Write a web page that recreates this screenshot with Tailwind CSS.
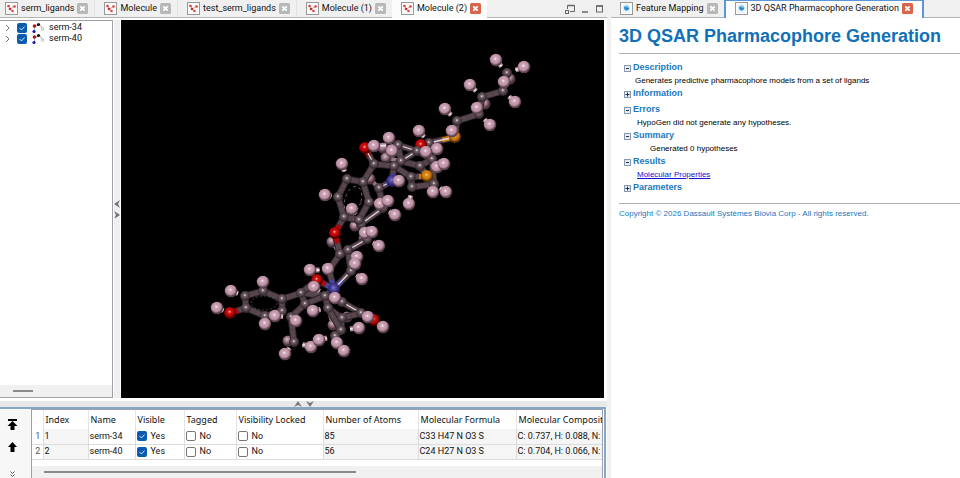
<!DOCTYPE html>
<html lang="en">
<head>
    <meta charset="UTF-8">
    <meta name="viewport" content="width=device-width, initial-scale=1.0">
    <script src="https://cdn.jsdelivr.net/npm/@tailwindcss/browser@4"></script>
    <title>3D QSAR Pharmacophore Generation</title>
</head>
<body class="bg-[#f0f0f0]">
    <!-- shared icons -->
    <svg class="hidden">
        <symbol id="i-mol" viewBox="0 0 13 13">
            <rect x=".5" y=".5" width="12" height="12" fill="#fafafa" stroke="#999"/>
            <path d="M3.5 4 5.5 7 9 4.5M5.5 7 7 9" stroke="#e9a0a0" fill="none"/>
            <circle cx="3.5" cy="4" r="1.3" fill="#d84040"/><circle cx="5" cy="7" r="1.3" fill="#c83030"/><circle cx="9.5" cy="4.5" r="1.3" fill="#d84040"/><circle cx="7.5" cy="9" r="1.3" fill="#e05050"/>
        </symbol>
        <symbol id="i-web" viewBox="0 0 13 13">
            <rect x=".5" y=".5" width="12" height="12" fill="#fafafa" stroke="#999"/>
            <path d="M3 2.500h4l3 3v5H3z" fill="#e4f2fb"/>
            <circle cx="6.500" cy="6" r="2.800" fill="#7cc6ee"/><path d="M4 5.500c2-1.500 4 1.500 5 0v1c-1 2-3 2-4 1z" fill="#2f86c4"/>
        </symbol>
        <symbol id="i-x" viewBox="0 0 11 11">
            <rect width="11" height="11" rx="1.500" fill="currentColor"/>
            <path d="M3.300 3.300l4.400 4.400M7.700 3.300l-4.400 4.400" stroke="#fff" stroke-width="1.800"/>
        </symbol>
        <symbol id="i-lig" viewBox="0 0 12 12">
            <path d="M2.500 5 7 2.500 10.500 6M2.500 5v5" stroke="#aaa" fill="none"/>
            <circle cx="2.500" cy="4" r="1.800" fill="#b01818"/><circle cx="6.500" cy="2.500" r="1.600" fill="#111"/><circle cx="2" cy="9.500" r="1.600" fill="#1414c0"/><circle cx="10.500" cy="7" r="1.300" fill="#fff" stroke="#999" stroke-width=".6"/>
        </symbol>
        <symbol id="i-minus" viewBox="0 0 7 7">
            <rect x=".5" y=".5" width="6" height="6" fill="#e8edf3" stroke="#8898b0"/><path d="M2 3.500h3" stroke="#234"/>
        </symbol>
        <symbol id="i-plus" viewBox="0 0 7 7">
            <rect x=".5" y=".5" width="6" height="6" fill="#e8edf3" stroke="#8898b0"/><path d="M1.500 3.500h4M3.500 1.500v4" stroke="#234"/>
        </symbol>
    </svg>

    <div class="grid grid-cols-[607fr_353fr] min-h-screen font-[Roboto,sans-serif] text-[9px] leading-[11px] text-[#111]">

        <!-- molecule window -->
        <div class="flex flex-col min-w-0 bg-white">
            <div class="flex h-[18px] bg-[#f0f0f0] whitespace-nowrap">
                <div class="flex items-center gap-[3px] pl-[5px] pr-[6px] border-b border-r border-b-[#b4b4b4] border-r-[#e2e2e2]">
                    <svg class="size-[13px]"><use href="#i-mol"/></svg><span>serm_ligands</span>
                    <button aria-label="Close" class="text-[#b8b8b8]"><svg class="size-[11px]"><use href="#i-x"/></svg></button>
                </div>
                <div class="flex items-center gap-[3px] pl-[9px] pr-[6px] border-b border-r border-b-[#b4b4b4] border-r-[#e2e2e2]">
                    <svg class="size-[13px]"><use href="#i-mol"/></svg><span>Molecule</span>
                    <button aria-label="Close" class="text-[#b8b8b8]"><svg class="size-[11px]"><use href="#i-x"/></svg></button>
                </div>
                <div class="flex items-center gap-[3px] pl-[9px] pr-[6px] border-b border-r border-b-[#b4b4b4] border-r-[#e2e2e2]">
                    <svg class="size-[13px]"><use href="#i-mol"/></svg><span>test_serm_ligands</span>
                    <button aria-label="Close" class="text-[#b8b8b8]"><svg class="size-[11px]"><use href="#i-x"/></svg></button>
                </div>
                <div class="flex items-center gap-[3px] pl-[9px] pr-[6px] border-b border-b-[#b4b4b4]">
                    <svg class="size-[13px]"><use href="#i-mol"/></svg><span>Molecule (1)</span>
                    <button aria-label="Close" class="text-[#b8b8b8]"><svg class="size-[11px]"><use href="#i-x"/></svg></button>
                </div>
                <div class="flex items-center gap-[3px] pl-[9px] pr-[6px] pb-px bg-[#fcfcfc]">
                    <svg class="size-[13px]"><use href="#i-mol"/></svg><span>Molecule (2)</span>
                    <button aria-label="Close" class="text-[#d9644a]"><svg class="size-[11px]"><use href="#i-x"/></svg></button>
                </div>
                <div class="flex flex-1 items-center justify-end gap-[6px] pr-[3px] border-b border-[#b4b4b4] text-[#666]">
                    <button aria-label="Restore"><svg class="w-[10px] h-[10px]" viewBox="0 0 10 10" fill="none" stroke="currentColor"><path d="M2.500 5V1.500h7v6H5"/><path d="M2.500 1.500h7" stroke-width="1.500"/><rect x=".5" y="6.500" width="3" height="3"/></svg></button>
                    <button aria-label="Minimize"><svg class="w-[8px] h-[10px]" viewBox="0 0 8 10"><path d="M1 8h6" stroke="currentColor" stroke-width="1.500"/></svg></button>
                    <button aria-label="Maximize"><svg class="w-[9px] h-[10px]" viewBox="0 0 9 10" fill="none" stroke="currentColor"><rect x="1.500" y="2" width="6" height="6"/><path d="M1 2h7" stroke-width="1.500"/></svg></button>
                </div>
            </div>

            <div class="flex flex-1 pt-[2px] pb-[3px] pr-[3px]">
                <div class="flex flex-col w-[113px] border-t border-r border-b border-[#a0a0a8]">
                    <ul class="flex-1 pt-px">
                        <li class="flex items-center h-[11px] pl-[5px]">
                            <svg class="w-[6px] h-[8px] mr-[6px]" viewBox="0 0 6 8"><path d="M1 1l3 3-3 3" fill="none" stroke="#777"/></svg>
                            <input id="l34" type="checkbox" checked class="appearance-none size-[10px] rounded-[2px] bg-[#0a5cb0]">
                            <svg class="size-[10px] -ml-[10px] pointer-events-none" viewBox="0 0 10 10"><path d="M2.500 5l2 2 3-3.500" fill="none" stroke="#cfe4f8"/></svg>
                            <svg class="size-3 ml-[5px] mr-[5px]"><use href="#i-lig"/></svg>
                            <label for="l34">serm-34</label>
                        </li>
                        <li class="flex items-center h-[11px] pl-[5px]">
                            <svg class="w-[6px] h-[8px] mr-[6px]" viewBox="0 0 6 8"><path d="M1 1l3 3-3 3" fill="none" stroke="#777"/></svg>
                            <input id="l40" type="checkbox" checked class="appearance-none size-[10px] rounded-[2px] bg-[#0a5cb0]">
                            <svg class="size-[10px] -ml-[10px] pointer-events-none" viewBox="0 0 10 10"><path d="M2.500 5l2 2 3-3.500" fill="none" stroke="#cfe4f8"/></svg>
                            <svg class="size-3 ml-[5px] mr-[5px]"><use href="#i-lig"/></svg>
                            <label for="l40">serm-40</label>
                        </li>
                    </ul>
                    <div class="flex items-center h-3 pl-[13px] bg-[#f0f0f0]"><div class="w-5 h-[2px] bg-[#8a8a8a]"></div></div>
                </div>
                <div class="flex items-center w-[6px] mx-px bg-[#efefef]">
                    <svg class="w-[6px] h-[18px]" viewBox="0 0 6 18" fill="#707070"><path d="M6 0 0 4l6 4-2-4zM0 11l6 4-6 4 2-4z"/></svg>
                </div>
                <div class="relative flex-1 bg-black">
                    <svg id="view" class="absolute inset-0 size-full" viewBox="121 20 483 378">
                        <defs>
                            <radialGradient id="gH" cx=".45" cy=".4"><stop offset="0" stop-color="#fff4fa"/><stop offset=".25" stop-color="#d0a8ba"/><stop offset=".75" stop-color="#b88ea2"/><stop offset="1" stop-color="#5c424c"/></radialGradient>
                            <radialGradient id="gB" cx=".42" cy=".36"><stop offset="0" stop-color="#d8bcc8"/><stop offset=".4" stop-color="#a98493"/><stop offset="1" stop-color="#4a343c"/></radialGradient>
                            <radialGradient id="gC" cx=".48" cy=".42"><stop offset="0" stop-color="#fff"/><stop offset=".25" stop-color="#7c6a72"/><stop offset=".6" stop-color="#57464e"/><stop offset="1" stop-color="#362a30"/></radialGradient>
                            <radialGradient id="gO" cx=".46" cy=".4"><stop offset="0" stop-color="#ffd0d0"/><stop offset=".25" stop-color="#d81414"/><stop offset=".7" stop-color="#b00404"/><stop offset="1" stop-color="#500000"/></radialGradient>
                            <radialGradient id="gS" cx=".46" cy=".4"><stop offset="0" stop-color="#ffe0a0"/><stop offset=".25" stop-color="#e08c18"/><stop offset=".7" stop-color="#c47410"/><stop offset="1" stop-color="#5a3400"/></radialGradient>
                            <radialGradient id="gN" cx=".46" cy=".4"><stop offset="0" stop-color="#8080d8"/><stop offset=".3" stop-color="#5850a8"/><stop offset="1" stop-color="#241c60"/></radialGradient>
                        </defs>
                    </svg>
                </div>
            </div>

            <div class="flex items-center justify-center h-[6px] bg-[#e8e8e8]">
                <svg class="w-[20px] h-[6px]" viewBox="0 0 20 6" fill="#777"><path d="M0 6 4 0l4 6-4-2zM12 0l4 6 4-6-4 2z"/></svg>
            </div>

            <!-- ligand table -->
            <div class="flex h-[71px] border-t-2 border-r-2 border-[#87a5c4] mr-px">
                <div class="flex flex-col items-center w-[31px] pr-[7px] pt-[10px] bg-[#f7f7f7]">
                    <button aria-label="Move to top"><svg class="w-[11px] h-[11px]" viewBox="0 0 11 11"><path d="M1 0h9v2H1zM5.500 2 10.500 7H7.500v4h-4V7H.5z"/></svg></button>
                    <button aria-label="Move up" class="mt-3"><svg class="w-[9px] h-[10px]" viewBox="0 0 9 10"><path d="M4.500 0 9 5H6.500v5h-4V5H0z"/></svg></button>
                    <button aria-label="More" class="mt-[19px]"><svg class="w-[5px] h-[6px]" viewBox="0 0 5 6" fill="none" stroke="#555"><path d="M.5.5l2 2 2-2M.5 3.500l2 2 2-2"/></svg></button>
                </div>
                <div class="flex-1 min-w-0 flex flex-col overflow-hidden border-t border-l border-r border-[#98a0ac] mr-px">
                    <div class="flex-1 overflow-hidden">
                        <table class="table-fixed w-[660px] border-collapse">
                            <colgroup><col class="w-[11px]"><col class="w-[45px]"><col class="w-[47px]"><col class="w-[49px]"><col class="w-[52px]"><col class="w-[87px]"><col class="w-[95px]"><col class="w-[98px]"><col></colgroup>
                            <thead class="font-['Noto_Sans'] text-left whitespace-nowrap">
                                <tr class="h-[19px] *:font-normal *:p-0 *:pl-[2px] *:border-r *:border-[#e4e4e4]">
                                    <th></th><th>Index</th><th>Name</th><th>Visible</th><th>Tagged</th><th>Visibility Locked</th><th>Number of Atoms</th><th>Molecular Formula</th><th>Molecular Composition</th>
                                </tr>
                            </thead>
                            <tbody class="whitespace-nowrap">
                                <tr class="h-[15px] *:p-0 *:pl-px *:border-r *:border-b *:border-[#dcdcdc]">
                                    <th class="font-normal text-[#555]">1</th><td class="bg-[#f5f5f5]">1</td><td>serm-34</td>
                                    <td><label class="flex items-center gap-1"><input type="checkbox" checked class="appearance-none size-[10px] rounded-[2px] bg-[#0a5cb0]"><svg class="size-[10px] -ml-[14px]" viewBox="0 0 10 10"><path d="M2.500 5l2 2 3-3.500" fill="none" stroke="#cfe4f8"/></svg>Yes</label></td>
                                    <td><label class="flex items-center gap-1"><input type="checkbox" class="appearance-none size-[10px] rounded-[2px] border border-[#777]">No</label></td>
                                    <td><label class="flex items-center gap-1"><input type="checkbox" class="appearance-none size-[10px] rounded-[2px] border border-[#777]">No</label></td>
                                    <td class="bg-[#f5f5f5]">85</td><td class="bg-[#f5f5f5]">C33 H47 N O3 S</td><td class="bg-[#f5f5f5]">C: 0.737, H: 0.088, N: 0.026</td>
                                </tr>
                                <tr class="h-[15px] *:p-0 *:pl-px *:border-r *:border-b *:border-[#dcdcdc]">
                                    <th class="font-normal text-[#555]">2</th><td class="bg-[#f5f5f5]">2</td><td>serm-40</td>
                                    <td><label class="flex items-center gap-1"><input type="checkbox" checked class="appearance-none size-[10px] rounded-[2px] bg-[#0a5cb0]"><svg class="size-[10px] -ml-[14px]" viewBox="0 0 10 10"><path d="M2.500 5l2 2 3-3.500" fill="none" stroke="#cfe4f8"/></svg>Yes</label></td>
                                    <td><label class="flex items-center gap-1"><input type="checkbox" class="appearance-none size-[10px] rounded-[2px] border border-[#777]">No</label></td>
                                    <td><label class="flex items-center gap-1"><input type="checkbox" class="appearance-none size-[10px] rounded-[2px] border border-[#777]">No</label></td>
                                    <td class="bg-[#f5f5f5]">56</td><td class="bg-[#f5f5f5]">C24 H27 N O3 S</td><td class="bg-[#f5f5f5]">C: 0.704, H: 0.066, N: 0.034</td>
                                </tr>
                            </tbody>
                        </table>
                    </div>
                    <div class="flex items-center h-3 pl-3 bg-[#f0f0f0]"><div class="w-[312px] h-[2px] bg-[#8a8a8a]"></div></div>
                </div>
            </div>
        </div>

        <!-- report window -->
        <div class="flex flex-col min-w-0 border-l-4 border-[#f0f0f0] bg-white">
            <div class="flex h-[18px] bg-[#f0f0f0] whitespace-nowrap">
                <div class="flex items-center gap-[3px] pl-[9px] pr-[6px] border-b border-[#b4b4b4]">
                    <svg class="size-[13px]"><use href="#i-web"/></svg><span>Feature Mapping</span>
                    <button aria-label="Close" class="text-[#b8b8b8]"><svg class="size-[11px]"><use href="#i-x"/></svg></button>
                </div>
                <div class="flex items-center gap-[3px] pl-[9px] pr-[9px] pb-[2px] bg-[#fcfcfc] border-t border-l-2 border-r-2 border-[#5a96d8]">
                    <svg class="size-[13px]"><use href="#i-web"/></svg><span>3D QSAR Pharmacophore Generation</span>
                    <button aria-label="Close" class="text-[#d9644a]"><svg class="size-[11px]"><use href="#i-x"/></svg></button>
                </div>
                <div class="flex-1 border-b border-[#b4b4b4]"></div>
            </div>
            <div class="pl-2 font-['Liberation_Sans'] text-[8px] leading-3 text-black">
                <h1 class="h-[36px] pt-[6px] border-b border-[#b0b0b0] text-[18px] leading-6 font-bold text-[#1070b8] whitespace-nowrap">3D QSAR Pharmacophore Generation</h1>
                <div class="pl-[5px] pt-[6px] pb-[9px] [&_p]:pt-[2px] [&_p]:leading-[10px]">
                    <h2 class="flex items-center gap-[2px] h-[14px] text-[9px] font-bold text-[#2078c0]"><svg class="size-[7px] mt-[3px]"><use href="#i-minus"/></svg>Description</h2>
                    <p class="pl-[11px]">Generates predictive pharmacophore models from a set of ligands</p>
                    <h2 class="flex items-center gap-[2px] h-[14px] text-[9px] font-bold text-[#2078c0]"><svg class="size-[7px] mt-[3px]"><use href="#i-plus"/></svg>Information</h2>
                    <h2 class="flex items-center gap-[2px] h-[14px] mt-[2px] text-[9px] font-bold text-[#2078c0]"><svg class="size-[7px] mt-[3px]"><use href="#i-minus"/></svg>Errors</h2>
                    <p class="pl-[13px]">HypoGen did not generate any hypotheses.</p>
                    <h2 class="flex items-center gap-[2px] h-[14px] text-[9px] font-bold text-[#2078c0]"><svg class="size-[7px] mt-[3px]"><use href="#i-minus"/></svg>Summary</h2>
                    <p class="pl-[26px]">Generated 0 hypotheses</p>
                    <h2 class="flex items-center gap-[2px] h-[14px] text-[9px] font-bold text-[#2078c0]"><svg class="size-[7px] mt-[3px]"><use href="#i-minus"/></svg>Results</h2>
                    <p class="pl-[13px]"><a href="#" class="underline text-[#1010d8]">Molecular Properties</a></p>
                    <h2 class="flex items-center gap-[2px] h-[14px] text-[9px] font-bold text-[#2078c0]"><svg class="size-[7px] mt-[3px]"><use href="#i-plus"/></svg>Parameters</h2>
                </div>
                <p class="pt-1 border-t border-[#b0b0b0] text-[#1878c0]">Copyright © 2026 Dassault Systèmes Biovia Corp - All rights reserved.</p>
            </div>
        </div>
    </div>

    <script>
        // heavy atoms: element, x, y
        const atoms = {
            a1: "C 507 73", a2: "C 503 91", a3: "C 482 97", a4: "C 479 114", a5: "C 457 121", s1: "S 455 137", a6: "C 429 143", o1: "O 421 145",
            b1: "C 398 145", b2: "C 417 151", b3: "C 432 159", b4: "C 420 166", b5: "C 401 161",
            o2: "O 365 148", c1: "C 374 164", c2: "C 394 166", c3: "C 411 177", s2: "S 427 176", c4: "C 412 187", c5: "C 434 184",
            n1: "N 392 181", d1: "C 379 188", d2: "C 383 208", d3: "C 361 224",
            e1: "C 363 182", e2: "C 347 179", e3: "C 338 197", e4: "C 344 217", e5: "C 359 220", e6: "C 369 202",
            o3: "O 335 233", f1: "C 340 254", f2: "C 348 250", f3: "C 367 239", f4: "C 351 271", f5: "C 329 270", n2: "N 334 289", o4: "O 317 280",
            g1: "C 245 296", g2: "C 246 308", g3: "C 265 316", g4: "C 282 311", g5: "C 282 299", g6: "C 263 291", o5: "O 230 313",
            h1: "C 301 293", h2: "C 305 304", h3: "C 291 317", h4: "C 294 342", h5: "C 325 296", h6: "C 342 302", h7: "C 361 313", o6: "O 374 320",
            k1: "C 328 308", k2: "C 342 318", k3: "C 341 330", k4: "C 335 336"
        };
        const bonds = "a1-a2 a2-a3 a3-a4 a4-a5 a5-s1 s1-a6 a6-b2 a6-o1 b1-b2 b2-b3 b3-b4 b4-b5 b5-b1 b3-c5 b5-c2 b5-b2 o2-c1 c1-c2 c2-c3 c3-s2 c3-c4 c4-c5 s2-c5 s2-b4 c1-e1 n1-d1 n1-c2 d1-d2 d2-d3 e1-e2 e2-e3 e3-e4 e4-e5 e5-e6 e6-e1 e4-o3 o3-f1 f1-f2 f2-f3 f1-f5 f2-f4 f5-n2 f4-n2 o4-n2 g1-g2 g2-g3 g3-g4 g4-g5 g5-g6 g6-g1 g2-o5 g5-h1 h1-h2 h1-h5 h2-h3 h3-h4 h2-h5 h5-h6 h6-h7 h7-o6 h5-n2 h5-k1 k1-k2 k2-k3 k3-k4 k1-k3 h7-k2 d3-e5 o4-h1".split(" ");
        // hydrogens: parent, x, y
        const hydrogens = "a1 496 60,a1 524 67,a2 504 82,a2 515 102,a3 470 85,a4 477 108,a4 490 125,a5 445 109,a5 452 131,a6 419 131,a6 437 149,a6 426 152,b1 389 138,b1 374 146,b1 392 151,b3 437 167,b3 444 164,c4 409 204,c5 433 192,c5 446 192,n1 399 181,e2 342 164,e3 325 195,e5 352 209,d2 380 204,d2 388 201,d2 395 215,d3 365 233,d3 372 232,f3 379 246,f2 357 257,f4 355 264,f4 362 279,f5 310 270,f5 328 269,h5 314 287,h5 335 298,g1 231 291,o5 217 308,g6 263 282,g3 265 324,h3 275 316,h3 296 321,h4 285 354,h4 311 347,k1 313 311,k3 359 328,k4 319 340,k4 337 343,k4 344 351,h7 368 317,o6 383 327".split(",");
        // hydrogens partly hidden behind the chain
        const hidden = "a1 510 79,a3 485 104,b1 383 148,b5 386 158,d1 370 179,f1 332 242,h4 288 341,k2 347 317,k1 333 325,f3 364 239,e5 355 226".split(",");
        const shiny = ["s1-a6", "b1-b2", "h6-h7", "d2-d3", "f2-f3", "f4-n2", "o2-c1", "b5-b2", "n1-d1"];
        const color = { C: "#57464e", O: "#b00808", S: "#c47a14", N: "#4a449c" };
        const pos = id => atoms[id].split(" ");
        let out = "";

        function stick(x1, y1, x2, y2, w, col) {
            out += `<path d="M${x1} ${y1}L${x2} ${y2}" stroke="${col}" stroke-width="${w}"/>`;
        }
        function ball(kind, x, y, r) {
            out += `<circle cx="${x}" cy="${y}" r="${r}" fill="url(#g${kind})"/>`;
        }

        hidden.forEach(h => {
            const [p, x, y] = h.split(" ");
            const [, px, py] = pos(p);
            stick(px, py, x, y, 4, "#96788a");
            ball("B", x, y, 5.5);
        });
        bonds.forEach(b => {
            const [a, c] = b.split("-");
            const [ea, x1, y1] = pos(a);
            const [ec, x2, y2] = pos(c);
            const mx = (+x1 + +x2) / 2, my = (+y1 + +y2) / 2;
            stick(x1, y1, x2, y2, 7, "#2c2227");
            stick(x1, y1, mx, my, 5, color[ea]);
            stick(mx, my, x2, y2, 5, color[ec]);
            if (shiny.includes(b)) stick(x1, y1, x2, y2, 1.3, "#e4d8de");
        });
        Object.values(atoms).forEach(a => {
            const [e, x, y] = a.split(" ");
            ball(e, x, y, e == "C" ? 5 : 6);
        });
        hydrogens.forEach(h => {
            const [p, x, y] = h.split(" ");
            const [, px, py] = pos(p);
            const mx = (+x + +px) / 2, my = (+y + +py) / 2;
            stick(mx, my, x, y, 5, "#a98696");
            stick(mx, my, x, y, 2, "#f0dfe7");
        });
        hydrogens.forEach(h => {
            const [, x, y] = h.split(" ");
            ball("H", x, y, 6.3);
        });
        // aromatic rings
        out += '<ellipse cx="353" cy="200" rx="8" ry="14" transform="rotate(18 353 200)" fill="none" stroke="#8c7c84" stroke-width=".7" stroke-dasharray="3 3"/>';
        out += '<ellipse cx="264" cy="303" rx="13" ry="7" fill="none" stroke="#6c5c64" stroke-width=".7" stroke-dasharray="2 2"/>';
        document.getElementById("view").innerHTML += out;
    </script>
</body>
</html>
